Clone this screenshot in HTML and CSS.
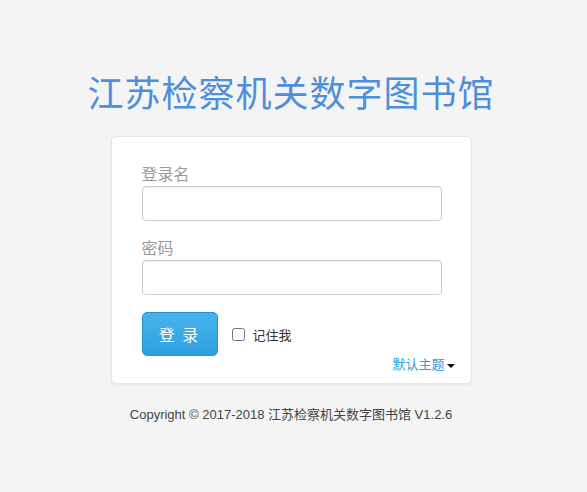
FILE: index.html
```html
<!DOCTYPE html>
<html lang="zh-CN">
<head>
    <meta charset="UTF-8">
    <meta name="viewport" content="width=device-width, initial-scale=1.0">
    <title>江苏检察机关数字图书馆</title>
    <link rel="stylesheet" href="styles.css">
</head>
<body>
    <div class="page">
        <h1 class="site-title">江苏检察机关数字图书馆</h1>
        <form class="login-box" id="loginForm">
            <label class="field-label" for="username">登录名</label>
            <input class="field-input" type="text" id="username" name="username">

            <label class="field-label" for="password">密码</label>
            <input class="field-input" type="password" id="password" name="password">

            <div class="action-row">
                <button class="btn-login" type="submit">登 录</button>
                <label class="remember">
                    <input type="checkbox" name="remember">
                    <span>记住我</span>
                </label>
            </div>
            <div class="theme-row">
                <a class="theme-link" href="#">默认主题<span class="caret"></span></a>
            </div>
        </form>
        <p class="copyright">Copyright © 2017-2018 江苏检察机关数字图书馆 V1.2.6</p>
    </div>
</body>
</html>
```

FILE: styles.css
```css
body {
    margin: 0;
    padding: 0;
    background-color: #f4f4f4;
    font-family: "Liberation Sans", Arial, "Noto Sans CJK SC", sans-serif;
}
.page {
    display: flex;
    flex-direction: column;
    align-items: center;
    padding: 74px 5px 0 0;
}
.site-title {
    margin: 0 0 20px;
    font-family: "Liberation Serif", "Noto Sans CJK SC", serif;
    font-size: 36px;
    font-weight: normal;
    line-height: 42px;
    color: #4d8fdb;
    letter-spacing: 1px;
}
.login-box {
    width: 300px;
    padding: 27px 29px 9px 30px;
    background: #fff;
    border: 1px solid #e6e6e6;
    border-radius: 5px;
    box-shadow: 0 1px 2px rgba(0, 0, 0, 0.05);
}
.field-label {
    display: block;
    font-size: 16px;
    line-height: 22px;
    color: #999;
}
.field-input {
    display: block;
    box-sizing: border-box;
    width: 300px;
    height: 35px;
    margin: 0 0 17px;
    padding: 6px 10px;
    border: 1px solid #ccc;
    border-radius: 4px;
    font-size: 14px;
    box-shadow: inset 0 1px 1px rgba(0, 0, 0, 0.06);
}
.action-row {
    display: flex;
    align-items: center;
}
.btn-login {
    width: 76px;
    height: 44px;
    border: 1px solid #2a8fd4;
    border-radius: 5px;
    background: linear-gradient(#46b4ec, #2e9fe1);
    color: #fff;
    font-size: 16px;
    letter-spacing: 2px;
    cursor: pointer;
    font-family: "Noto Sans CJK SC", sans-serif;
}
.remember {
    display: flex;
    align-items: center;
    margin-left: 14px;
    font-size: 13px;
    color: #333;
}
.remember input {
    width: 13px;
    height: 13px;
    margin: 0 8px 0 0;
}
.theme-row {
    display: flex;
    justify-content: flex-end;
    margin-right: -13px;
}
.theme-link {
    font-size: 13px;
    line-height: 18px;
    color: #2a9fd6;
    text-decoration: none;
}
.caret {
    display: inline-block;
    width: 0;
    height: 0;
    margin-left: 2px;
    vertical-align: middle;
    border-top: 4px solid #000;
    border-left: 4px solid transparent;
    border-right: 4px solid transparent;
}
.copyright {
    margin: 20px 0 0;
    font-size: 13px;
    color: #444;
}
```
